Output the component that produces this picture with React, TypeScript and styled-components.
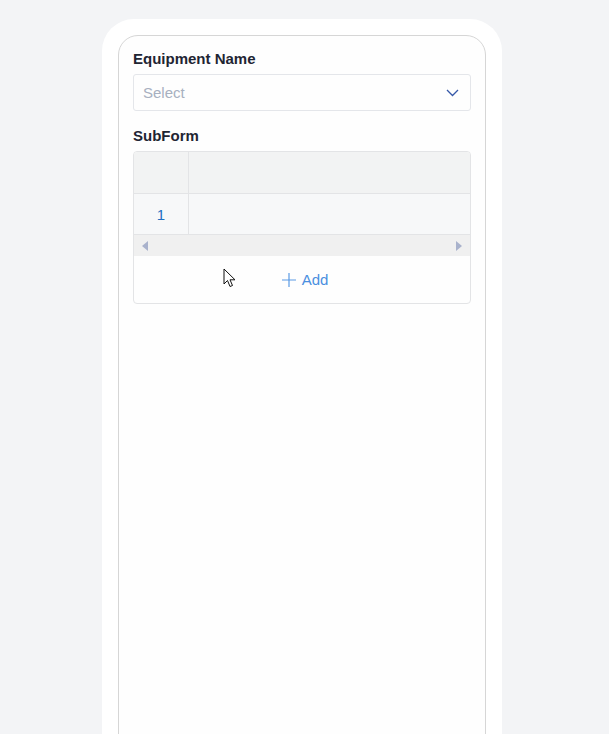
import styled, { createGlobalStyle } from "styled-components"

const GlobalStyle = createGlobalStyle`
  html, body {
    margin: 0;
    padding: 0;
    background: #f3f4f6;
    font-family: "Liberation Sans", Arial, sans-serif;
  }
`

const Page = styled.div`
  width: 609px;
  height: 734px;
  overflow: hidden;
  display: flex;
  justify-content: flex-start;
  padding: 19px 0 0 102px;
  box-sizing: border-box;
`

const Phone = styled.div`
  width: 400px;
  height: 760px;
  background: #ffffff;
  border-radius: 32px;
  padding: 16px;
  box-sizing: border-box;
`

const Screen = styled.div`
  position: relative;
  height: 760px;
  border: 1px solid #d6d6d6;
  border-radius: 20px;
  padding: 14px 14px 0;
  box-sizing: border-box;
  background: #fefefe;
`

const Label = styled.div`
  font-size: 15px;
  font-weight: 700;
  color: #1f2533;
  line-height: 18px;
  margin-bottom: 6px;
`

const SelectBox = styled.div`
  height: 37px;
  border: 1px solid #e4e6ea;
  border-radius: 3px;
  display: flex;
  align-items: center;
  justify-content: space-between;
  padding: 0 11px 0 9px;
  box-sizing: border-box;
  margin-bottom: 16px;
`

const Placeholder = styled.span`
  font-size: 15px;
  color: #a7b0c0;
`

const Table = styled.div`
  border: 1px solid #e3e4e6;
  border-radius: 4px;
  overflow: hidden;
`

const Row = styled.div<{ $bg: string; $h: number }>`
  display: grid;
  grid-template-columns: 54px 1fr;
  height: ${(p) => p.$h}px;
  background: ${(p) => p.$bg};
  border-bottom: 1px solid #e3e4e6;
`

const Cell = styled.div`
  display: flex;
  align-items: center;
  justify-content: center;
  font-size: 15px;
  color: #1f6fc2;
  & + & {
    border-left: 1px solid #e3e4e6;
  }
`

const ScrollBar = styled.div`
  height: 21px;
  background: #f0f0f0;
  display: flex;
  align-items: center;
  justify-content: space-between;
  padding: 0 8px;
`

const AddBar = styled.div`
  height: 47px;
  display: flex;
  align-items: center;
  justify-content: center;
  gap: 6px;
  padding-left: 6px;
  color: #4a8fe0;
  font-size: 15px;
`

const Cursor = styled.svg`
  position: absolute;
  left: 104px;
  top: 232px;
`

const Arrow = ({ dir }: { dir: "left" | "right" }) => (
  <svg width="6" height="10" viewBox="0 0 6 10">
    <path d={dir === "left" ? "M6 0 L0 5 L6 10 Z" : "M0 0 L6 5 L0 10 Z"} fill="#a9b2cc" />
  </svg>
)

export default function App() {
  return (
    <>
      <GlobalStyle />
      <Page>
        <Phone>
          <Screen>
            <Label>Equipment Name</Label>
            <SelectBox>
              <Placeholder>Select</Placeholder>
              <svg width="13" height="8" viewBox="0 0 13 8">
                <path d="M1 1 L6.5 6.5 L12 1" fill="none" stroke="#3558a8" strokeWidth="1.3" />
              </svg>
            </SelectBox>
            <Label>SubForm</Label>
            <Table>
              <Row $bg="#f2f3f3" $h={41}>
                <Cell />
                <Cell />
              </Row>
              <Row $bg="#f7f8f9" $h={40}>
                <Cell>1</Cell>
                <Cell />
              </Row>
              <ScrollBar>
                <Arrow dir="left" />
                <Arrow dir="right" />
              </ScrollBar>
              <AddBar>
                <svg width="14" height="14" viewBox="0 0 14 14">
                  <path d="M7 0 V14 M0 7 H14" stroke="#5a9ae4" strokeWidth="1.2" />
                </svg>
                Add
              </AddBar>
            </Table>
            <Cursor width="14" height="20" viewBox="0 0 14 20">
              <path d="M1 1 L1 16 L4.5 12.5 L7 18.5 L9.5 17.5 L7 11.8 L12 11.8 Z" fill="#ffffff" stroke="#111" strokeWidth="1" />
            </Cursor>
          </Screen>
        </Phone>
      </Page>
    </>
  )
}
